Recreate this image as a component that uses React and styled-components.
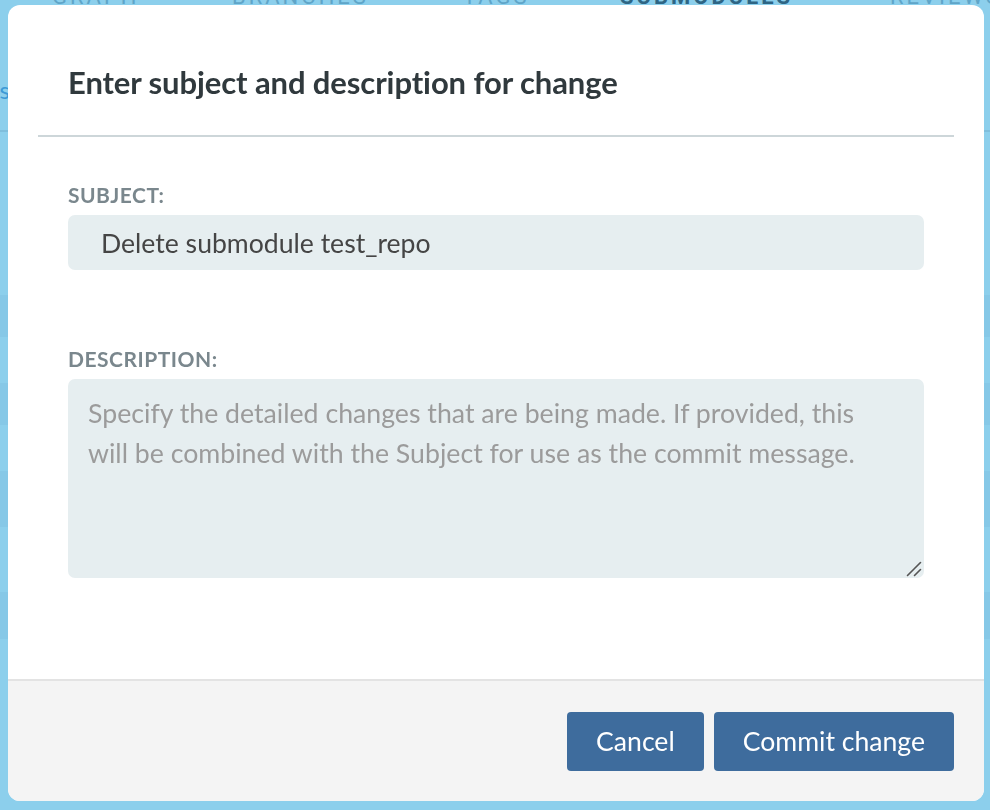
import React from "react";
import styled, { createGlobalStyle } from "styled-components";

const Global = createGlobalStyle`
  html, body { margin: 0; padding: 0; }
  body {
    background: #8ccfec;
    font-family: "Lato", "Liberation Sans", sans-serif;
    overflow: hidden;
  }
`;

const Page = styled.div`
  width: 990px;
  height: 810px;
  display: flex;
  flex-direction: column;
  background: #8ccfec;
  overflow: hidden;
`;

const TabBar = styled.div`
  height: 5px;
  overflow: hidden;
  display: flex;
  align-items: flex-end;
  padding-left: 52px;
  flex: none;
`;

const Tab = styled.div`
  font-family: "Roboto", sans-serif;
  font-size: 22px;
  line-height: 16px;
  height: 16px;
  letter-spacing: 3px;
  font-weight: ${(p) => (p.$active ? 700 : 400)};
  color: ${(p) => (p.$active ? "#2e6584" : "#5fa5c8")};
  width: ${(p) => p.$w}px;
  flex: none;
  white-space: nowrap;
`;

const SubHeader = styled.div`
  height: 127px;
  flex: none;
  display: flex;
  align-items: center;
  border-bottom: 2px solid #7fbedc;
  box-sizing: border-box;
`;

const Crumb = styled.span`
  font-size: 24px;
  color: #3d9ad6;
  margin-left: -14px;
  margin-top: 44px;
`;

const Row = styled.div`
  height: ${(p) => p.$h}px;
  flex: none;
  background: ${(p) => (p.$dark ? "#86c8e7" : "#8ccfec")};
`;

const Overlay = styled.div`
  position: fixed;
  inset: 0;
  display: flex;
  align-items: flex-start;
  justify-content: flex-start;
  padding: 5px 0 0 8px;
`;

const Modal = styled.div`
  width: 976px;
  height: 796px;
  background: #ffffff;
  border-radius: 12px;
  display: flex;
  flex-direction: column;
  overflow: hidden;
`;

const Header = styled.div`
  height: 132px;
  box-sizing: border-box;
  margin: 0 30px;
  border-bottom: 2px solid #cdd6d9;
  display: flex;
  align-items: center;
  padding-left: 30px;
  padding-top: 23px;
  flex: none;
`;

const Title = styled.h1`
  margin: 0;
  font-size: 31px;
  font-weight: 700;
  color: #30393d;
  letter-spacing: -0.1px;
`;

const Body = styled.div`
  flex: 1;
  padding: 46px 60px 0;
  display: flex;
  flex-direction: column;
`;

const Field = styled.div`
  display: flex;
  flex-direction: column;
  gap: 8px;
  margin-bottom: ${(p) => p.$mb}px;
`;

const Label = styled.label`
  font-size: 21px;
  font-weight: 700;
  color: #7a878d;
  letter-spacing: 0.5px;
  line-height: 24px;
`;

const TextInput = styled.input`
  height: 55px;
  box-sizing: border-box;
  border: none;
  outline: none;
  border-radius: 7px;
  background: #e6eef0;
  padding: 0 33px;
  font-family: "Lato", sans-serif;
  font-size: 26.6px;
  color: #454545;
`;

const AreaWrap = styled.div`
  position: relative;
  display: flex;
`;

const TextArea = styled.textarea`
  flex: 1;
  height: 199px;
  box-sizing: border-box;
  border: none;
  outline: none;
  border-radius: 7px;
  background: #e6eef0;
  padding: 14px 50px 14px 20px;
  font-family: "Lato", sans-serif;
  font-size: 26.7px;
  line-height: 40px;
  color: #454545;
  resize: none;
  &::placeholder { color: #9b9b9b; }
`;

const Grip = styled.svg`
  position: absolute;
  right: 2px;
  bottom: 1px;
  width: 16px;
  height: 16px;
  pointer-events: none;
`;

const Footer = styled.div`
  height: 122px;
  flex: none;
  box-sizing: border-box;
  background: #f4f4f4;
  border-top: 2px solid #e3e3e3;
  display: flex;
  align-items: center;
  justify-content: flex-end;
  gap: 10px;
  padding: 0 30px 0 0;
`;

const Button = styled.button`
  height: 59px;
  padding: 0 ${(p) => p.$px}px;
  border: none;
  border-radius: 4px;
  background: #3e6c9d;
  color: #ffffff;
  font-family: "Lato", sans-serif;
  font-size: 26.6px;
  cursor: pointer;
`;

const rows = [
  [163, false], [42, true], [46, false], [42, true], [46, false],
  [56, true], [65, false], [47, true], [200, false],
];

export default function App() {
  return (
    <>
      <Global />
      <Page>
        <TabBar>
          <Tab $w={180}>GRAPH</Tab>
          <Tab $w={231}>BRANCHES</Tab>
          <Tab $w={157}>TAGS</Tab>
          <Tab $w={270} $active>SUBMODULES</Tab>
          <Tab $w={200}>REVIEWS</Tab>
        </TabBar>
        <SubHeader>
          <Crumb>ns</Crumb>
        </SubHeader>
        {rows.map(([h, d], i) => (
          <Row key={i} $h={h} $dark={d} />
        ))}
      </Page>
      <Overlay>
        <Modal>
          <Header>
            <Title>Enter subject and description for change</Title>
          </Header>
          <Body>
            <Field $mb={77}>
              <Label>SUBJECT:</Label>
              <TextInput defaultValue="Delete submodule test_repo" />
            </Field>
            <Field $mb={0}>
              <Label>DESCRIPTION:</Label>
              <AreaWrap>
                <TextArea placeholder="Specify the detailed changes that are being made. If provided, this will be combined with the Subject for use as the commit message." />
                <Grip viewBox="0 0 16 16">
                  <path d="M1.5 14.5 L14.5 1.5 M8.5 14.5 L14.5 8.5" stroke="#555" strokeWidth="1.6" strokeLinecap="round" fill="none" />
                </Grip>
              </AreaWrap>
            </Field>
          </Body>
          <Footer>
            <Button $px={29}>Cancel</Button>
            <Button $px={29}>Commit change</Button>
          </Footer>
        </Modal>
      </Overlay>
    </>
  );
}
